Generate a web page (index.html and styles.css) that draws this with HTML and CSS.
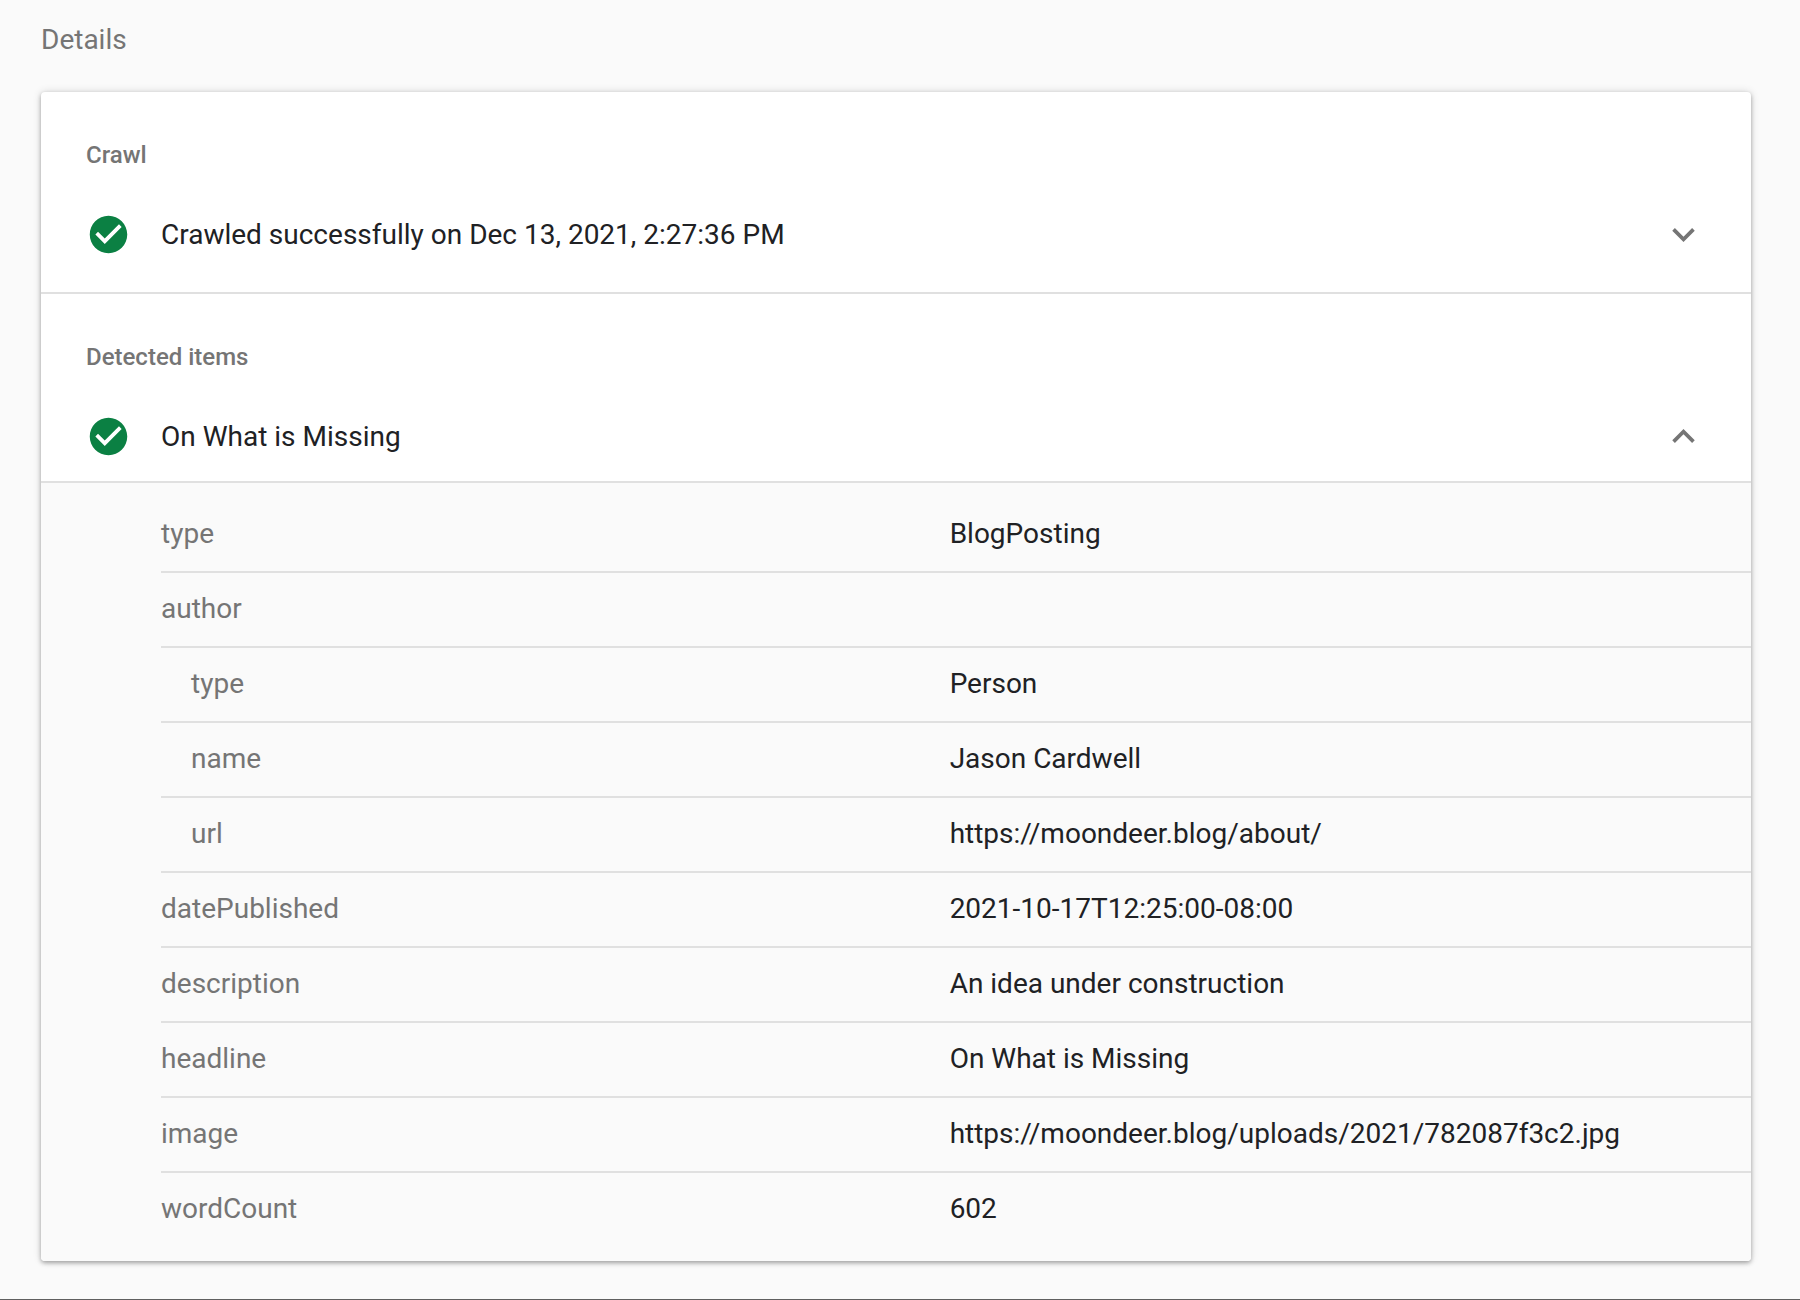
FILE: index.html
```html
<!DOCTYPE html>
<html lang="en">
<head>
<meta charset="utf-8">
<meta name="viewport" content="width=device-width, initial-scale=1">
<title>Details</title>
<link rel="stylesheet" href="styles.css">
</head>
<body>
<main class="page">
  <h1 class="page-title">Details</h1>
  <div class="card">
    <section class="section section-crawl">
      <h2 class="section-title">Crawl</h2>
      <button class="item" type="button" aria-expanded="false">
        <svg class="icon icon-ok" viewBox="0 0 24 24" aria-hidden="true"><path d="M12 2C6.48 2 2 6.48 2 12s4.480 10 10 10 10-4.480 10-10S17.520 2 12 2zm-2 15l-5-5 1.410-1.410L10 14.170l7.590-7.590L19 8l-9 9z"/></svg>
        <span class="item-label">Crawled successfully on Dec 13, 2021, 2:27:36 PM</span>
        <svg class="icon icon-chevron" viewBox="0 0 24 24" aria-hidden="true"><path d="M16.590 8.590L12 13.170 7.410 8.590 6 10l6 6 6-6z"/></svg>
      </button>
    </section>
    <section class="section section-items">
      <h2 class="section-title">Detected items</h2>
      <button class="item" type="button" aria-expanded="true" aria-controls="item-properties">
        <svg class="icon icon-ok" viewBox="0 0 24 24" aria-hidden="true"><path d="M12 2C6.480 2 2 6.480 2 12s4.480 10 10 10 10-4.480 10-10S17.520 2 12 2zm-2 15l-5-5 1.410-1.410L10 14.170l7.590-7.590L19 8l-9 9z"/></svg>
        <span class="item-label">On What is Missing</span>
        <svg class="icon icon-chevron" viewBox="0 0 24 24" aria-hidden="true"><path d="M12 8l-6 6 1.410 1.410L12 10.830l4.590 4.580L18 14z"/></svg>
      </button>
    </section>
    <div class="properties" id="item-properties">
      <table class="property-table">
        <tbody>
          <tr><th scope="row">type</th><td>BlogPosting</td></tr>
          <tr><th scope="row">author</th><td></td></tr>
          <tr class="nested"><th scope="row">type</th><td>Person</td></tr>
          <tr class="nested"><th scope="row">name</th><td>Jason Cardwell</td></tr>
          <tr class="nested"><th scope="row">url</th><td>https://moondeer.blog/about/</td></tr>
          <tr><th scope="row">datePublished</th><td>2021-10-17T12:25:00-08:00</td></tr>
          <tr><th scope="row">description</th><td>An idea under construction</td></tr>
          <tr><th scope="row">headline</th><td>On What is Missing</td></tr>
          <tr><th scope="row">image</th><td>https://moondeer.blog/uploads/2021/782087f3c2.jpg</td></tr>
          <tr><th scope="row">wordCount</th><td>602</td></tr>
        </tbody>
      </table>
    </div>
  </div>
</main>
</body>
</html>
```

FILE: styles.css
```css
* {
  box-sizing: border-box;
}

body {
  margin: 0;
  min-height: 100vh;
  background: #fafafa;
  border-bottom: 1px solid #5f5f5f;
  color: #202124;
  font-family: Roboto, "Liberation Sans", sans-serif;
  font-size: 28px;
  line-height: 36px;
}

.page {
  padding: 22px 49px 38px 41px;
}

.page-title {
  margin: 0 0 34px;
  color: #757575;
  font-size: 28px;
  font-weight: 400;
}

.card {
  overflow: hidden;
  background: #fff;
  border-radius: 4px;
  box-shadow: 0 2px 4px rgba(0, 0, 0, 0.3), 0 0 8px rgba(0, 0, 0, 0.14);
}

.section {
  display: flex;
  flex-direction: column;
  gap: 42px;
  padding: 48px 45px 35px;
  border-bottom: 2px solid #e0e0e0;
}

.section-items {
  padding-bottom: 22px;
}

.section-title {
  margin: 0;
  color: #757575;
  font-size: 24px;
  font-weight: 500;
  line-height: 30px;
}

.item {
  display: flex;
  align-items: center;
  gap: 30px;
  width: 100%;
  padding: 0;
  border: 0;
  background: none;
  color: inherit;
  font: inherit;
  text-align: left;
  cursor: pointer;
}

.item-label {
  flex: 1;
}

.icon {
  flex: none;
  width: 45px;
  height: 45px;
}

.icon-ok {
  fill: #0b8043;
}

.icon-chevron {
  fill: #757575;
}

.properties {
  padding: 15px 0 15px 120px;
  background: #fafafa;
}

.property-table {
  width: 100%;
  border-spacing: 0;
  table-layout: fixed;
}

.property-table th,
.property-table td {
  height: 75px;
  padding: 0 0 2px;
  border-bottom: 2px solid #e0e0e0;
  font-weight: 400;
  text-align: left;
}

.property-table th {
  width: 49.6%;
  color: #757575;
}

.property-table td {
  overflow-wrap: anywhere;
}

.property-table .nested th {
  padding-left: 30px;
}

.property-table tr:last-child th,
.property-table tr:last-child td {
  height: 73px;
  border-bottom: 0;
}
```
